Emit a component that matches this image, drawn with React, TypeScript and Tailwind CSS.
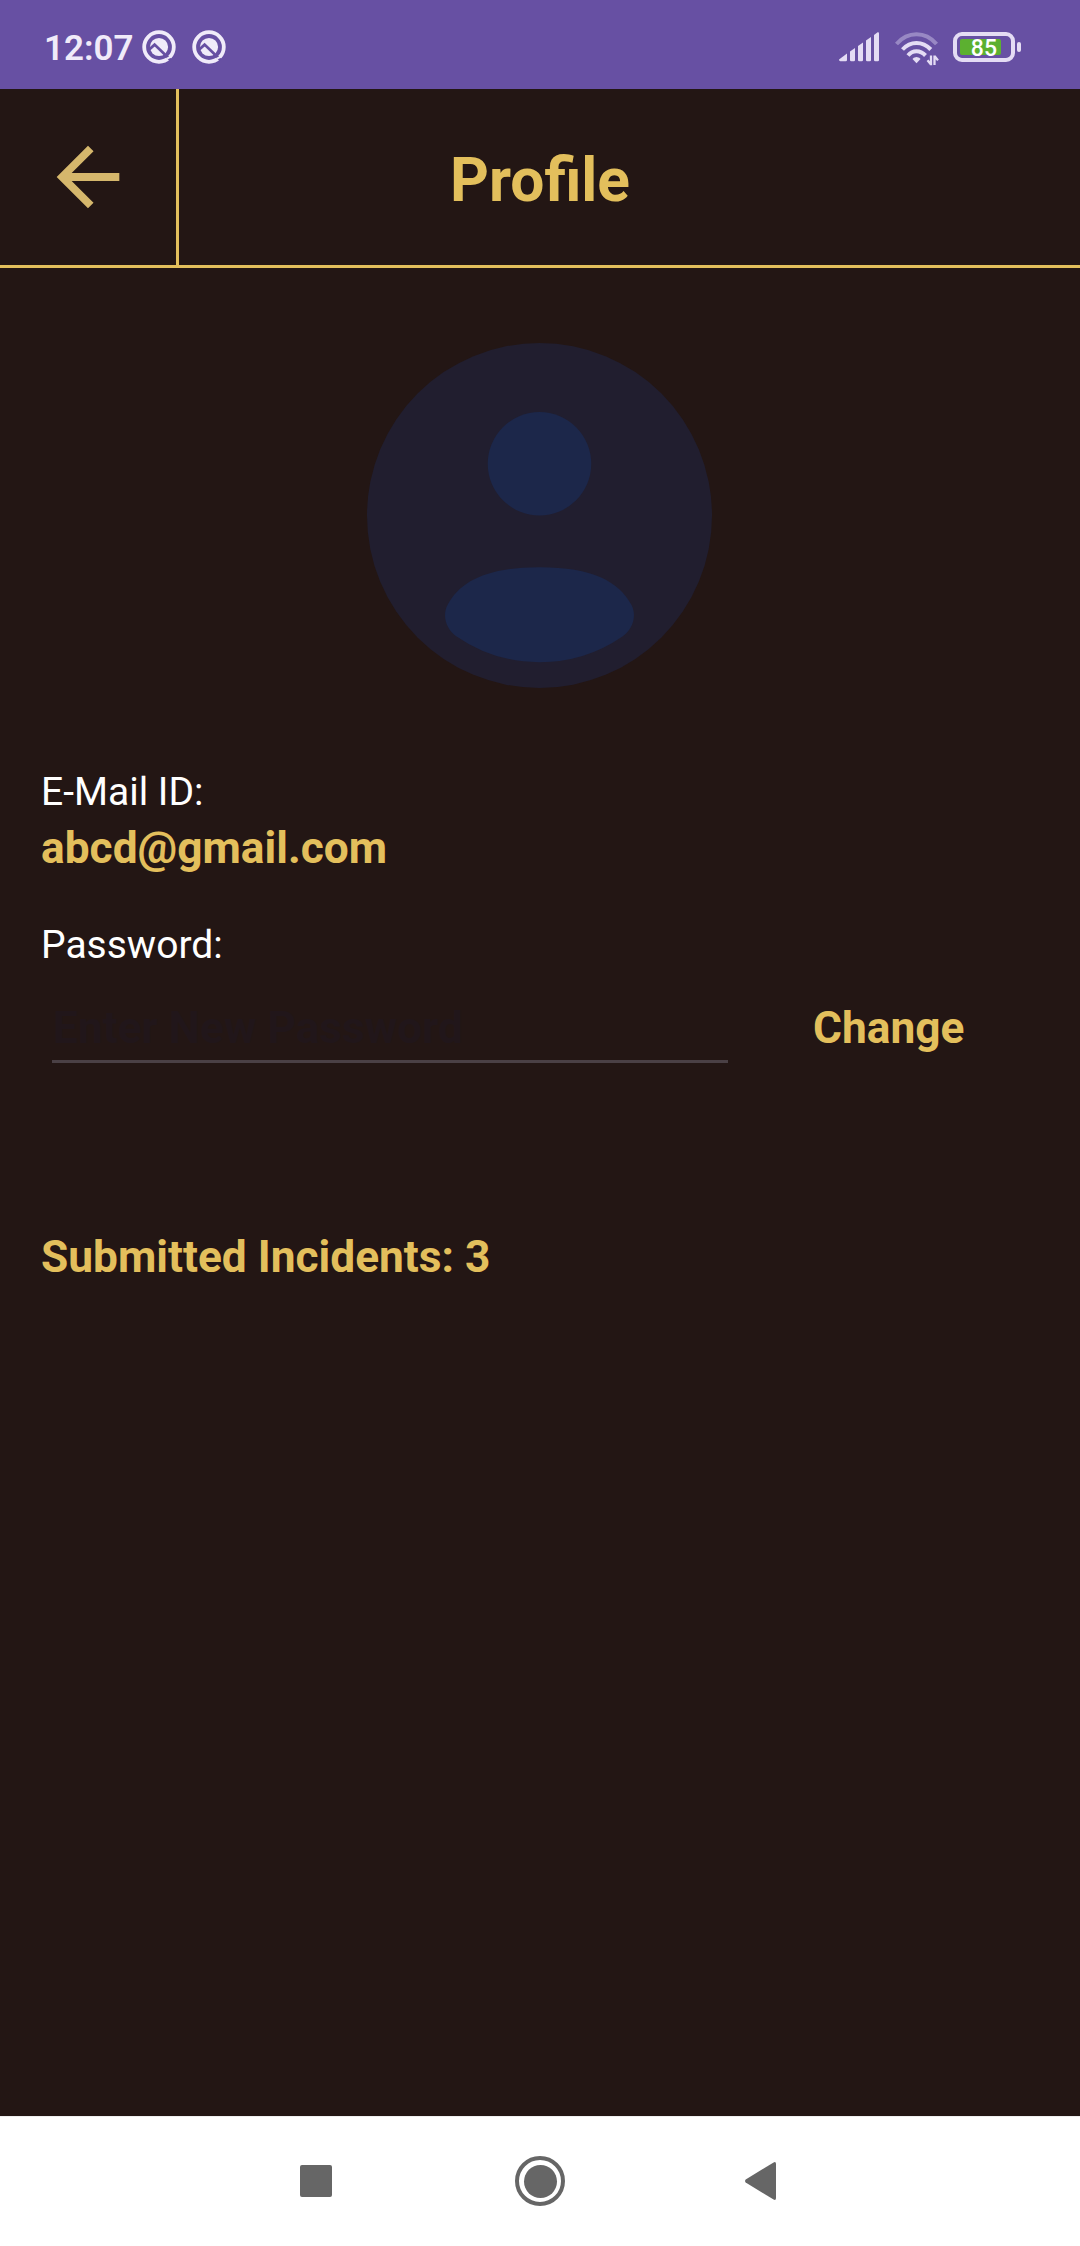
function AssistantIcon() {
  return (
    <svg className="size-[34px]" viewBox="0 0 34 34" fill="none">
      <circle cx="17" cy="17" r="14.8" stroke="#f0ebf9" strokeWidth="3.8" />
      <circle cx="17" cy="17" r="9.1" fill="#f0ebf9" />
      <path d="M7.5 19.3L12.6 14.6L28.6 30.1" stroke="#6750a3" strokeWidth="2.8" />
      <path d="M25 28.6L29 26.6" stroke="#f0ebf9" strokeWidth="2" />
    </svg>
  );
}

function SignalIcon() {
  return (
    <svg className="h-[30px] w-[41px]" viewBox="0 0 41 30" fill="#e4dcf4">
      <path d="M0 27.5L8 21.5V28Q8 29.3 6.7 29.3H1.3Q0 29.3 0 27.5Z" />
      <path d="M11 19.5L16 16V28Q16 29.3 14.7 29.3H12.3Q11 29.3 11 28Z" />
      <path d="M19 14L24 10.5V28Q24 29.3 22.7 29.3H20.3Q19 29.3 19 28Z" />
      <path d="M27 8.5L32 5V28Q32 29.3 30.7 29.3H28.3Q27 29.3 27 28Z" />
      <path d="M35 3L38.6 .3Q40 0 40 1.3V28Q40 29.3 38.7 29.3H36.3Q35 29.3 35 28Z" />
    </svg>
  );
}

function WifiIcon() {
  return (
    <svg className="h-[34px] w-[44px]" viewBox="0 0 44 34" fill="none" stroke="#e4dcf4" strokeWidth="4">
      <path d="M1.5 12Q10 2.3 21.5 2.3T41.5 12" opacity=".4" />
      <path d="M7.5 17.5Q13.5 11 21.5 11T35.8 17.5" />
      <path d="M13 23.5Q16.5 19.3 21.5 19.3T30.5 23.5" />
      <path d="M21.5 25Q25 25.3 25.5 27L21.5 31.2L17.5 27Q18 25.3 21.5 25Z" fill="#e4dcf4" stroke="none" />
      <path d="M36 23.5V33.2M36 32.5L32.5 28.2M39.5 33V23.5M39.5 24L43 28.4" strokeWidth="2.3" />
    </svg>
  );
}

function Battery() {
  return (
    <div className="flex items-center gap-[2px]">
      <div className="flex h-[30px] w-[62px] items-center rounded-[9px] border-4 border-[#e4dcf4] pl-[3px]">
        <div className="flex h-4 w-[41px] items-center justify-end rounded-[2px] bg-[#5cb030] pt-[2px] pr-[4px] text-[23px] leading-none font-medium text-white">
          85
        </div>
      </div>
      <div className="h-[10px] w-[4px] rounded-[2px] bg-[#e4dcf4]" />
    </div>
  );
}

function Avatar() {
  return (
    <svg className="size-[345px]" viewBox="2 2 20 20">
      <circle cx="12" cy="12" r="10" fill="#211e2f" />
      <g fill="#1c274a">
        <circle cx="12" cy="9" r="3" />
        <path d="M16.807 19.011A8.46 8.46 0 0 1 12 20.5a8.46 8.46 0 0 1-4.807-1.489c-.604-.415-.862-1.205-.51-1.848C7.41 15.83 8.91 15 12 15s4.59.83 5.318 2.163c.35.643.093 1.433-.511 1.848" />
      </g>
    </svg>
  );
}

export default function App() {
  return (
    <div className="flex h-[2246px] w-[1080px] flex-col overflow-hidden bg-[#231614] font-['Roboto',sans-serif]">
      <div className="flex h-[89px] shrink-0 items-center justify-between bg-[#6750a3] pt-[5px] pr-[59px] pl-[44px]">
        <div className="flex items-center">
          <span className="w-[98px] pt-[3px] text-[35px] leading-[40px] font-semibold text-[#f0ebf9]">12:07</span>
          <div className="flex gap-4">
            <AssistantIcon />
            <AssistantIcon />
          </div>
        </div>
        <div className="flex items-center">
          <SignalIcon />
          <div className="ml-[15px] pt-[4px]">
            <WifiIcon />
          </div>
          <div className="ml-[14px]">
            <Battery />
          </div>
        </div>
      </div>

      <header className="grid h-[179px] shrink-0 grid-cols-[179px_1fr_179px] border-b-3 border-[#e3bf5c]">
        <button className="flex items-center justify-center border-r-3 border-[#e3bf5c]">
          <svg className="size-[94px]" viewBox="0 0 24 24" fill="#d5b76c">
            <path d="M20 11H7.83l5.59-5.59L12 4l-8 8 8 8 1.41-1.41L7.83 13H20v-2z" />
          </svg>
        </button>
        <h1 className="pt-[56px] text-center text-[60.5px] leading-[72px] font-bold text-[#e3bf5c]">Profile</h1>
      </header>

      <main className="flex flex-1 flex-col px-[41px] pt-[75px]">
        <div className="flex justify-center pr-px">
          <Avatar />
        </div>
        <p className="mt-[80px] text-[39px] leading-[48px] text-white">E-Mail ID:</p>
        <p className="mt-[6px] text-[44.25px] leading-[52px] font-bold text-[#e3bf5c]">abcd@gmail.com</p>
        <p className="mt-[47px] text-[39px] leading-[48px] text-white">Password:</p>
        <div className="mt-[33px] flex">
          <div className="ml-[11px] h-[61px] w-[676px] border-b-3 border-[#4a4045] pl-px text-[44.25px] leading-[52px] font-bold text-[#21161a]">
            Enter New Password
          </div>
          <button className="ml-[85px] h-[52px] text-[44.25px] leading-[52px] font-bold text-[#e3bf5c]">Change</button>
        </div>
        <p className="mt-[168px] text-[44.25px] leading-[52px] font-bold text-[#e3bf5c]">Submitted Incidents: 3</p>
      </main>

      <nav className="flex h-[130px] shrink-0 items-center border-t border-[#eeeeee] bg-white pb-px pl-[300px]">
        <div className="size-8 rounded-[2px] bg-[#666666]" />
        <div className="ml-[183px] flex size-[50px] items-center justify-center rounded-full border-4 border-[#666666]">
          <div className="size-[33px] rounded-full bg-[#666666]" />
        </div>
        <svg className="ml-[180px] h-[38px] w-[31px]" viewBox="0 0 31 38" fill="#666666">
          <path d="M.7 17.6L28.6.4Q31-.6 31 2V36Q31 38.6 28.6 37.6L.7 20.4Q-.6 19 .7 17.6Z" />
        </svg>
      </nav>
    </div>
  );
}
